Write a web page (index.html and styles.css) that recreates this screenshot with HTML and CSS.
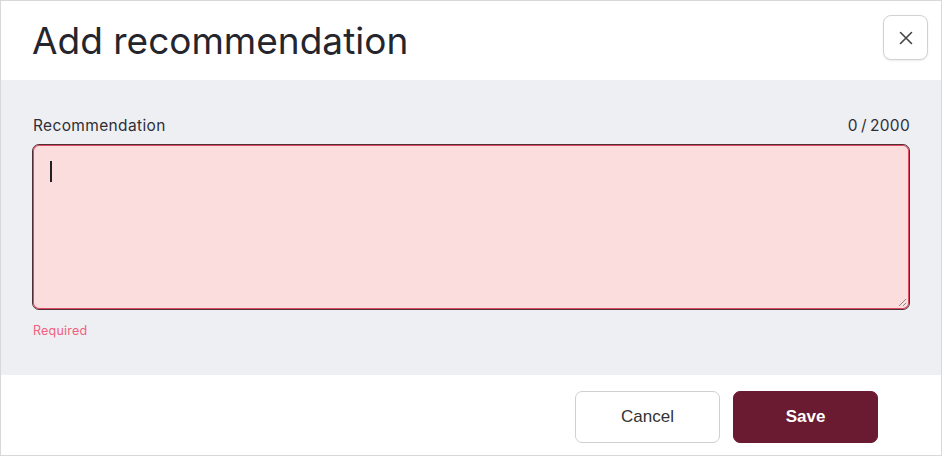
FILE: index.html
```html
<!DOCTYPE html>
<html>
<head>
<meta charset="utf-8">
<link rel="stylesheet" href="styles.css">
</head>
<body>
<div class="dialog">
  <header class="dialog-header">
    <h1 class="title">Add recommendation</h1>
    <button class="close-btn" aria-label="Close">
      <svg width="14" height="14" viewBox="0 0 14 14"><path d="M1.5 1.5 L12.5 12.5 M12.5 1.5 L1.5 12.5" stroke="#444" stroke-width="1.6" stroke-linecap="round"/></svg>
    </button>
  </header>
  <main class="dialog-body">
    <div class="field-head">
      <label class="label">Recommendation</label>
      <span class="counter">0&#8201;/&#8201;2000</span>
    </div>
    <div class="textarea">
      <span class="caret"></span>
      <svg class="grip" width="10" height="10" viewBox="0 0 10 10"><path d="M9 2 L2 9 M9 6 L6 9" stroke="#888" stroke-width="1"/></svg>
    </div>
    <div class="error">Required</div>
  </main>
  <footer class="dialog-footer">
    <button class="btn btn-cancel">Cancel</button>
    <button class="btn btn-save">Save</button>
  </footer>
</div>
</body>
</html>
```
FILE: styles.css
```css
* { box-sizing: border-box; }
html, body { margin: 0; padding: 0; background: #fff; }
.dialog {
  width: 942px;
  height: 456px;
  border: 1px solid #d8d8d8;
  display: flex;
  flex-direction: column;
  font-family: "Inter", "Noto Sans", sans-serif;
  color: #2b2b33;
}
.dialog-header {
  height: 79px;
  display: flex;
  align-items: flex-start;
  justify-content: space-between;
  padding: 0 13px 0 31px;
  background: #fff;
}
.title {
  margin: 18px 0 0;
  font-size: 37px;
  font-weight: 400;
  letter-spacing: 0;
  line-height: 44px;
  color: #25252d;
}
.close-btn {
  margin-top: 14px;
  width: 45px;
  height: 45px;
  border: 1px solid #d2d2d2;
  border-radius: 8px;
  background: #fff;
  display: flex;
  align-items: center;
  justify-content: center;
  padding: 0;
  box-shadow: 0 1px 2px rgba(0,0,0,0.08);
}
.dialog-body {
  height: 295px;
  background: #eeeff3;
  padding: 36px 31px 0 31px;
}
.field-head {
  display: flex;
  justify-content: space-between;
  align-items: baseline;
  padding: 0 0 0 1px;
  font-size: 15.5px;
  line-height: 20px;
  color: #2e2e36;
}
.label { letter-spacing: 0.35px; }
.counter { font-size: 15.5px; letter-spacing: 0.3px; }
.textarea {
  position: relative;
  margin-top: 8px;
  height: 166px;
  background: #fcdddd;
  border: 1px solid #4e3036;
  box-shadow: inset 0 0 0 1px #e04a60;
  border-radius: 7px;
  padding: 16px 17px;
}
.caret {
  display: block;
  width: 1.5px;
  height: 21px;
  background: #222;
}
.grip {
  position: absolute;
  right: 2px;
  bottom: 2px;
}
.error {
  margin-top: 13px;
  padding-left: 1px;
  font-size: 12.5px;
  letter-spacing: 0.2px;
  color: #f0607e;
}
.dialog-footer {
  flex: 1;
  background: #fff;
  display: flex;
  justify-content: flex-end;
  align-items: flex-start;
  gap: 13px;
  padding: 16px 63px 0 0;
}
.btn {
  width: 145px;
  height: 52px;
  border-radius: 7px;
  font-family: "Liberation Sans", Arial, sans-serif;
  font-size: 17px;
}
.btn-cancel {
  background: #fff;
  border: 1px solid #d0d0d0;
  color: #333;
}
.btn-save {
  background: #6a1b31;
  border: 1px solid #6a1b31;
  color: #fff;
  font-weight: 700;
}
```
